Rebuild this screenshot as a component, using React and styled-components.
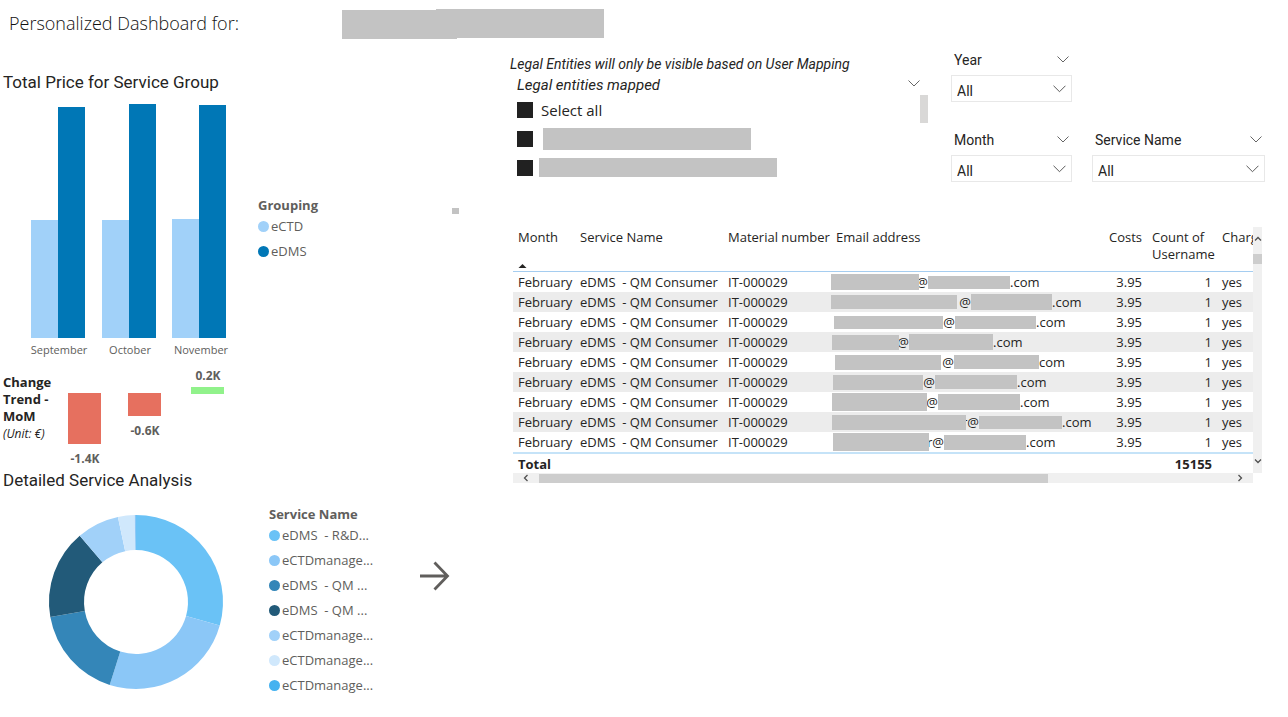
import React from "react";
import styled, { createGlobalStyle } from "styled-components";

const Global = createGlobalStyle`
  * { box-sizing: border-box; }
  body { margin: 0; background: #fff; color: #252423; font: 13px/20px "Open Sans", "Noto Sans", sans-serif; }
  h1, h2, h3, p, ul { margin: 0; padding: 0; font-weight: 400; }
  button { border: 0; padding: 0; background: none; font: inherit; color: inherit; display: flex; align-items: center; justify-content: center; }
`;

const DIN = `Roboto, "Open Sans", sans-serif`;
const GREY = "#605e5c";

const Page = styled.div`min-height: 100vh;`;
const Header = styled.header`
  display: flex; align-items: flex-start; height: 48px; padding: 9px 0 0 9px;
`;
const PageTitle = styled.h1`
  width: 333px; font-size: 18px; line-height: 28px; font-weight: 300; color: #111; white-space: nowrap;
`;
const NameMask = styled.div`
  width: 262px; height: 30px; background: #c3c3c3;
  clip-path: polygon(0 1px, 94px 1px, 94px 0, 100% 0, 100% 29px, 115px 29px, 115px 30px, 0 30px);
`;
const Main = styled.main`
  display: grid; grid-template-columns: minmax(0, 509fr) minmax(0, 779fr);
`;
const Column = styled.div`display: flex; flex-direction: column; min-width: 0;`;

const SectionTitle = styled.h2`
  height: ${(p) => p.$height}px; padding: ${(p) => p.$top}px 0 0 3px; font: 17px/24px ${DIN}; white-space: nowrap;
`;
const ChartRow = styled.section`
  display: flex; align-items: flex-start; height: ${(p) => p.$height}px;
`;
const Drawing = styled.svg`
  display: block; flex: none; overflow: visible; font-family: "Open Sans", sans-serif;
`;
const AxisText = styled.text`font-size: 11px; fill: ${GREY}; text-anchor: middle;`;
const DataText = styled(AxisText)`font-size: 12px; font-weight: 700;`;

const Legend = styled.div`
  width: ${(p) => p.$width}px; padding-top: ${(p) => p.$top}px; color: ${GREY};
`;
const LegendTitle = styled.h3`font-size: 13px; line-height: 17px; font-weight: 700;`;
const LegendList = styled.ul`list-style: none; line-height: 25px;`;
const LegendItem = styled.li`
  display: flex; align-items: center; gap: 2px; height: 25px; white-space: pre;
  &::before { content: ""; width: 11px; height: 11px; border-radius: 50%; background: ${(p) => p.$color}; }
`;
const Speck = styled.div`width: 7px; height: 6px; margin: 112px 0 0 118px; background: #c3c3c3;`;
const TrendLabel = styled.div`
  width: 64px; padding: 4px 0 0 3px; font-size: 13px; line-height: 17px;
  strong { display: block; }
  em { font-size: 12px; white-space: nowrap; }
`;
const DonutBox = styled.div`width: 269px; padding: 22px 0 0 48px;`;
const ArrowButton = styled.button`width: 32px; height: 32px; margin: 68px 0 0 30px;`;

const Controls = styled.div`display: flex; height: 179px;`;
const Slicer = styled.section`width: 420px;`;
const SlicerNote = styled.p`
  padding: 6px 0 0 1px; font: italic 14px/20px ${DIN}; white-space: nowrap;
`;
const SlicerHead = styled.div`
  display: flex; justify-content: space-between; height: 21px; padding: 0 9px 0 8px;
  font: italic 15px/22px ${DIN};
  button { height: 18px; }
`;
const SlicerBody = styled.div`display: flex; justify-content: space-between; align-items: flex-start;`;
const OptionList = styled.div`padding-left: 8px;`;
const Option = styled.label`
  display: flex; align-items: center; gap: ${(p) => p.$gap || 8}px; height: 29px; font-size: 15px;
`;
const Check = styled.input`
  appearance: none; width: 16px; height: 16px; margin: 0; background: #212121;
`;
const OptionMask = styled.span`
  width: ${(p) => p.$w}px; height: ${(p) => p.$h}px; background: #c3c3c3;
`;
const SlicerThumb = styled.div`width: 8px; height: 28px; margin-right: 1px; background: #d9d8d7;`;

const Filters = styled.div`
  display: grid; grid-template-columns: 121px 173px; grid-template-rows: 80px 80px; column-gap: 20px;
  padding-left: 22px; align-content: start;
`;
const Filter = styled.div`grid-column: ${(p) => p.$col};`;
const FilterHead = styled.div`
  display: flex; justify-content: space-between; height: 27px; padding: 2px 3px 0;
  font: 14px/20px ${DIN};
  button { height: 18px; }
`;
const SelectBox = styled.div`
  position: relative; height: 27px;
  svg { position: absolute; right: 6px; top: 10px; pointer-events: none; }
`;
const Select = styled.select`
  appearance: none; display: block; width: 100%; height: 27px; padding: 4px 5px 0; border: 1px solid #e8e8e8;
  border-radius: 0; background: #fff; color: #252423; font: 14px/20px ${DIN};
`;

const TableFrame = styled.section`
  display: grid; grid-template-columns: minmax(0, 1fr) 9px; margin: 0 26px 0 4px;
`;
const TableClip = styled.div`height: 246px; overflow: hidden;`;
const Table = styled.table`
  width: 100%; border-collapse: separate; border-spacing: 0; table-layout: fixed; font-size: 13px; line-height: 19px;
  th, td { padding: 0 5px; text-align: left; font-weight: 400; white-space: pre; }
  thead th { height: 45px; padding-top: 2px; vertical-align: top; line-height: 17px; border-bottom: 1px solid #a5cdf0; }
  tbody td { height: 20px; }
  tbody tr:nth-child(even) td { background: #ececec; }
  tfoot th, tfoot td { height: 21px; padding-top: 1px; font-weight: 700; border-top: 2px solid #c5e3f8; }
`;
const NumberCell = styled.td`&& { text-align: right; }`;
const NumberHead = styled.th`&& { text-align: right; }`;
const HeadText = styled.span`display: block; height: 35px;`;
const SortMark = styled.svg`display: block;`;
const EmailCell = styled.td`&& { padding: 0 0 0 ${(p) => p.$lead}px; }`;
const Email = styled.span`display: flex; align-items: center; height: 19px;`;
const Mask = styled.span`
  position: relative; z-index: 1; flex: none; width: ${(p) => p.$w}px; height: ${(p) => p.$h}px; background: #c3c3c3;
`;
const At = styled.span`
  display: flex; justify-content: flex-end; flex: none; width: ${(p) => p.$w}px;
`;
const VBar = styled.div`
  display: flex; flex-direction: column; height: 246px; padding: 8px 0; background: #f0f0f0;
`;
const VThumb = styled.div`height: 10px; margin: 11px 0 auto; background: #cdcdcd;`;
const HBar = styled.div`
  display: flex; align-items: center; height: 10px; background: #f0f0f0;
  button { width: 26px; height: 10px; }
`;
const HTrack = styled.div`flex: 1; height: 9px;`;
const HThumb = styled.div`width: 74%; height: 9px; background: #cdcdcd;`;

const Chevron = ({ w = 12, h = 7 }) => (
  <svg width={w} height={h} viewBox="0 0 12 7" fill="none" stroke="#555" strokeWidth="0.9">
    <path d="M.5.5 6 6 11.5.5" />
  </svg>
);
const Caret = ({ turn = 0 }) => (
  <svg width="8" height="8" viewBox="0 0 8 8" fill="none" stroke="#505050" strokeWidth="1.3">
    <path d="M1 5.5 4 2.5 7 5.5" transform={`rotate(${turn} 4 4)`} />
  </svg>
);

const months = [
  { name: "September", x: 31, mid: 59, light: 118, dark: 231 },
  { name: "October", x: 102, mid: 130, light: 118, dark: 234 },
  { name: "November", x: 172, mid: 201, light: 119, dark: 233 },
];
const trend = [
  { label: "-1.4K", x: 4, y: 23, h: 51, labelY: 93, color: "#e6705f" },
  { label: "-0.6K", x: 64, y: 23, h: 23, labelY: 65, color: "#e6705f" },
  { label: "0.2K", x: 127, y: 17, h: 7, labelY: 10, color: "#91f28b" },
];
const slices = [
  [0, 105.7, "#6ac2f6"], [105.7, 197.6, "#8bc7f7"], [197.6, 260, "#3486b8"],
  [260, 319.7, "#225a79"], [319.7, 348, "#a1d1f9"], [348, 359.2, "#d0e8fc"], [359.2, 360, "#8bc7f7"],
];
const services = [
  ["eDMS  - R&D...", "#6ac2f6"], ["eCTDmanage...", "#8bc7f7"], ["eDMS  - QM ...", "#3486b8"],
  ["eDMS  - QM ...", "#225a79"], ["eCTDmanage...", "#a1d1f9"], ["eCTDmanage...", "#d0e8fc"], ["eCTDmanage...", "#45b2f0"],
];
const rows = [
  { lead: 0, a: [88, 16], at: "@", gap: 9, b: [82, 13], end: ".com" },
  { lead: 0, a: [126, 14], at: "@", gap: 14, b: [81, 16], end: ".com" },
  { lead: 3, a: [109, 13], at: "@", gap: 12, b: [81, 13], end: ".com" },
  { lead: 1, a: [67, 15], at: "@", gap: 10, b: [84, 16], end: ".com" },
  { lead: 4, a: [106, 15], at: "@", gap: 13, b: [85, 14], end: "com" },
  { lead: 2, a: [90, 15], at: "@", gap: 12, b: [82, 14], end: ".com" },
  { lead: 1, a: [95, 18], at: "@", gap: 11, b: [82, 16], end: ".com" },
  { lead: 1, a: [134, 15], at: "r@", gap: 13, b: [83, 13], end: ".com" },
  { lead: 2, a: [96, 18], at: "r@", gap: 15, b: [82, 15], end: ".com" },
];

const ringPath = (from, to) => {
  const pt = (deg, r) => {
    const t = (deg * Math.PI) / 180;
    return `${88 + r * Math.sin(t)} ${88 - r * Math.cos(t)}`;
  };
  return `M${pt(from, 87)}A87 87 0 0 1 ${pt(to, 87)}L${pt(to, 52)}A52 52 0 0 0 ${pt(from, 52)}Z`;
};

const FilterField = ({ id, label, col }) => (
  <Filter $col={col}>
    <FilterHead>
      <label htmlFor={id}>{label}</label>
      <button aria-label={`${label} options`}><Chevron /></button>
    </FilterHead>
    <SelectBox>
      <Select id={id}><option>All</option></Select>
      <Chevron w={13} h={8} />
    </SelectBox>
  </Filter>
);

export default function App() {
  return (
    <Page>
      <Global />
      <Header>
        <PageTitle>Personalized Dashboard for:</PageTitle>
        <NameMask />
      </Header>
      <Main>
        <Column>
          <SectionTitle $height={48} $top={22}>Total Price for Service Group</SectionTitle>
          <ChartRow $height={274}>
            <Drawing width="258" height="266" role="img" aria-label="Total price by month">
              {months.map((m) => (
                <g key={m.name}>
                  <rect x={m.x} y={242 - m.light} width="27" height={m.light} fill="#a1d1f9" />
                  <rect x={m.x + 27} y={242 - m.dark} width="27" height={m.dark} fill="#0077b6" />
                  <AxisText x={m.mid} y="258">{m.name}</AxisText>
                </g>
              ))}
            </Drawing>
            <Legend $width={76} $top={101}>
              <LegendTitle>Grouping</LegendTitle>
              <LegendList>
                <LegendItem $color="#a1d1f9">eCTD</LegendItem>
                <LegendItem $color="#0077b6">eDMS</LegendItem>
              </LegendList>
            </Legend>
            <Speck />
          </ChartRow>
          <ChartRow $height={97}>
            <TrendLabel><strong>Change Trend - MoM</strong><em>(Unit: €)</em></TrendLabel>
            <Drawing width="170" height="97" role="img" aria-label="Month over month change">
              {trend.map((t) => (
                <g key={t.label}>
                  <rect x={t.x} y={t.y} width="33" height={t.h} fill={t.color} />
                  <DataText x={t.x + 17} y={t.labelY}>{t.label}</DataText>
                </g>
              ))}
            </Drawing>
          </ChartRow>
          <SectionTitle $height={25} $top={1}>Detailed Service Analysis</SectionTitle>
          <ChartRow $height={210}>
            <DonutBox>
              <Drawing width="176" height="176" role="img" aria-label="Service share">
                {slices.map(([from, to, color]) => <path key={from} d={ringPath(from, to)} fill={color} />)}
              </Drawing>
            </DonutBox>
            <Legend $width={120} $top={14}>
              <LegendTitle>Service Name</LegendTitle>
              <LegendList>
                {services.map(([name, color]) => <LegendItem key={color} $color={color}>{name}</LegendItem>)}
              </LegendList>
            </Legend>
            <ArrowButton aria-label="Next">
              <svg width="32" height="32" viewBox="0 0 32 32" fill="none" stroke={GREY} strokeWidth="2.8">
                <path d="M1 16H28M15.500 2.500 28.500 16 15.500 29.500" />
              </svg>
            </ArrowButton>
          </ChartRow>
        </Column>

        <Column>
          <Controls>
            <Slicer>
              <SlicerNote>Legal Entities will only be visible based on User Mapping</SlicerNote>
              <SlicerHead>
                Legal entities mapped
                <button aria-label="Legal entities options"><Chevron /></button>
              </SlicerHead>
              <SlicerBody>
                <OptionList>
                  <Option><Check type="checkbox" />Select all</Option>
                  <Option $gap={10}><Check type="checkbox" aria-label="Entity 1" /><OptionMask $w={208} $h={22} /></Option>
                  <Option $gap={6}><Check type="checkbox" aria-label="Entity 2" /><OptionMask $w={238} $h={19} /></Option>
                </OptionList>
                <SlicerThumb />
              </SlicerBody>
            </Slicer>
            <Filters>
              <FilterField id="year" label="Year" col={1} />
              <FilterField id="month" label="Month" col={1} />
              <FilterField id="service" label="Service Name" col={2} />
            </Filters>
          </Controls>
          <TableFrame>
            <TableClip>
              <Table>
                <colgroup>
                  <col width="62" /><col width="148" /><col width="108" /><col />
                  <col width="43" /><col width="70" /><col width="36" />
                </colgroup>
                <thead>
                  <tr>
                    <th><HeadText>Month</HeadText>
                      <SortMark width="9" height="4" viewBox="0 0 8 4"><path d="M0 4 4 0 8 4Z" fill="#252423" /></SortMark>
                    </th>
                    <th><HeadText>Service Name</HeadText></th>
                    <th><HeadText>Material number</HeadText></th>
                    <th><HeadText>Email address</HeadText></th>
                    <NumberHead><HeadText>Costs</HeadText></NumberHead>
                    <th><HeadText>{"Count of\nUsername"}</HeadText></th>
                    <th><HeadText>Charg</HeadText></th>
                  </tr>
                </thead>
                <tbody>
                  {rows.map((r, i) => (
                    <tr key={i}>
                      <td>February</td>
                      <td>{"eDMS  - QM Consumer"}</td>
                      <td>IT-000029</td>
                      <EmailCell $lead={r.lead}>
                        <Email>
                          <Mask $w={r.a[0]} $h={r.a[1]} />
                          <At $w={r.gap}>{r.at}</At>
                          <Mask $w={r.b[0]} $h={r.b[1]} />
                          {r.end}
                        </Email>
                      </EmailCell>
                      <NumberCell>3.95</NumberCell>
                      <NumberCell>1</NumberCell>
                      <td>yes</td>
                    </tr>
                  ))}
                </tbody>
                <tfoot>
                  <tr>
                    <th scope="row">Total</th><td /><td /><td /><td /><NumberCell>15155</NumberCell><td />
                  </tr>
                </tfoot>
              </Table>
            </TableClip>
            <VBar>
              <button aria-label="Scroll up"><Caret /></button>
              <VThumb />
              <button aria-label="Scroll down"><Caret turn={180} /></button>
            </VBar>
            <HBar>
              <button aria-label="Scroll left"><Caret turn={-90} /></button>
              <HTrack><HThumb /></HTrack>
              <button aria-label="Scroll right"><Caret turn={90} /></button>
            </HBar>
          </TableFrame>
        </Column>
      </Main>
    </Page>
  );
}
